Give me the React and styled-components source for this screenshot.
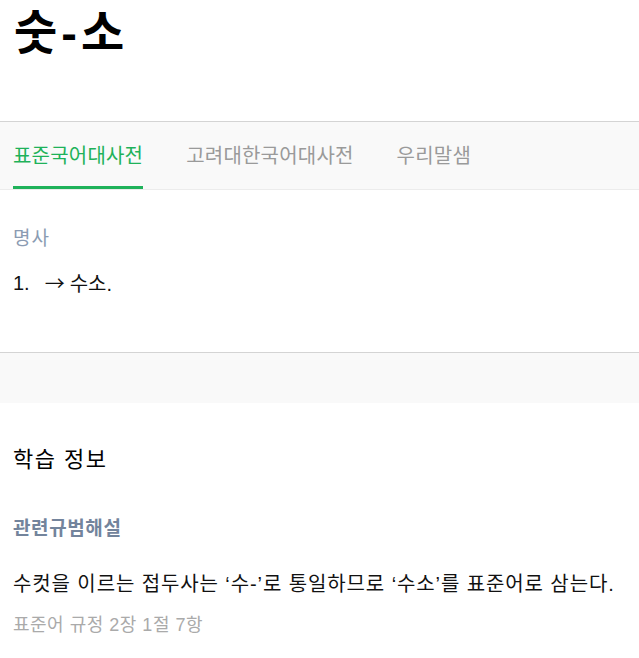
import React from "react";
import styled, { createGlobalStyle } from "styled-components";

const Global = createGlobalStyle`
  html, body { margin: 0; padding: 0; background: #fff; }
  body { font-family: "Liberation Sans", "Noto Sans CJK KR", sans-serif; color: #111; }
  * { box-sizing: border-box; }
`;

const Header = styled.header`
  height: 122px;
  border-bottom: 1px solid #d4d4d4;
  padding: 0 14px;
`;

const Title = styled.h1`
  margin: 0;
  font-size: 47px;
  font-weight: 700;
  line-height: 66px;
  letter-spacing: 4px;
  color: #000;
`;

const TabBar = styled.nav`
  display: flex;
  gap: 43px;
  height: 68px;
  padding: 0 13px;
  background: #f9f9f9;
  border-bottom: 1px solid #ececec;
`;

const Tab = styled.div`
  height: 67px;
  font-size: 20px;
  letter-spacing: 0.2px;
  line-height: 68px;
  color: ${(p) => (p.$active ? "#1fb25a" : "#9a9a9a")};
  border-bottom: 3px solid ${(p) => (p.$active ? "#1fb25a" : "transparent")};
`;

const Content = styled.section`
  height: 163px;
  padding: 20px 13px 0;
  border-bottom: 1px solid #d4d4d4;
`;

const Pos = styled.div`
  font-size: 19px;
  letter-spacing: 1px;
  line-height: 58px;
  color: #8b9bb2;
`;

const Sense = styled.div`
  font-size: 20px;
  line-height: 30px;
  color: #111;
  display: flex;
  gap: 15px;
`;

const Arrow = styled.span`
  font-family: "Noto Sans CJK KR", sans-serif;
  margin-right: 5px;
`;

const Spacer = styled.div`
  height: 50px;
  background: #f9f9f9;
`;

const Info = styled.section`
  padding: 40px 13px 20px;
`;

const InfoTitle = styled.h2`
  margin: 0;
  font-size: 22px;
  font-weight: 400;
  letter-spacing: 1.5px;
  line-height: 34px;
  color: #000;
`;

const RuleTitle = styled.h3`
  margin: 35px 0 0;
  font-size: 19px;
  font-weight: 700;
  letter-spacing: 0.6px;
  line-height: 34px;
  color: #73849c;
`;

const RuleText = styled.p`
  margin: 22px 0 0;
  font-size: 20px;
  letter-spacing: 0.9px;
  line-height: 32px;
  color: #111;
`;

const RuleRef = styled.p`
  margin: 13px 0 0;
  font-size: 18px;
  letter-spacing: 0.5px;
  line-height: 24px;
  color: #aaa;
`;

export default function App() {
  return (
    <>
      <Global />
      <Header>
        <Title>숫-소</Title>
      </Header>
      <TabBar>
        <Tab $active>표준국어대사전</Tab>
        <Tab>고려대한국어대사전</Tab>
        <Tab>우리말샘</Tab>
      </TabBar>
      <Content>
        <Pos>명사</Pos>
        <Sense>
          <span>1.</span>
          <span>
            <Arrow>→</Arrow>수소.
          </span>
        </Sense>
      </Content>
      <Spacer />
      <Info>
        <InfoTitle>학습 정보</InfoTitle>
        <RuleTitle>관련규범해설</RuleTitle>
        <RuleText>수컷을 이르는 접두사는 ‘수-’로 통일하므로 ‘수소’를 표준어로 삼는다.</RuleText>
        <RuleRef>표준어 규정 2장 1절 7항</RuleRef>
      </Info>
    </>
  );
}
